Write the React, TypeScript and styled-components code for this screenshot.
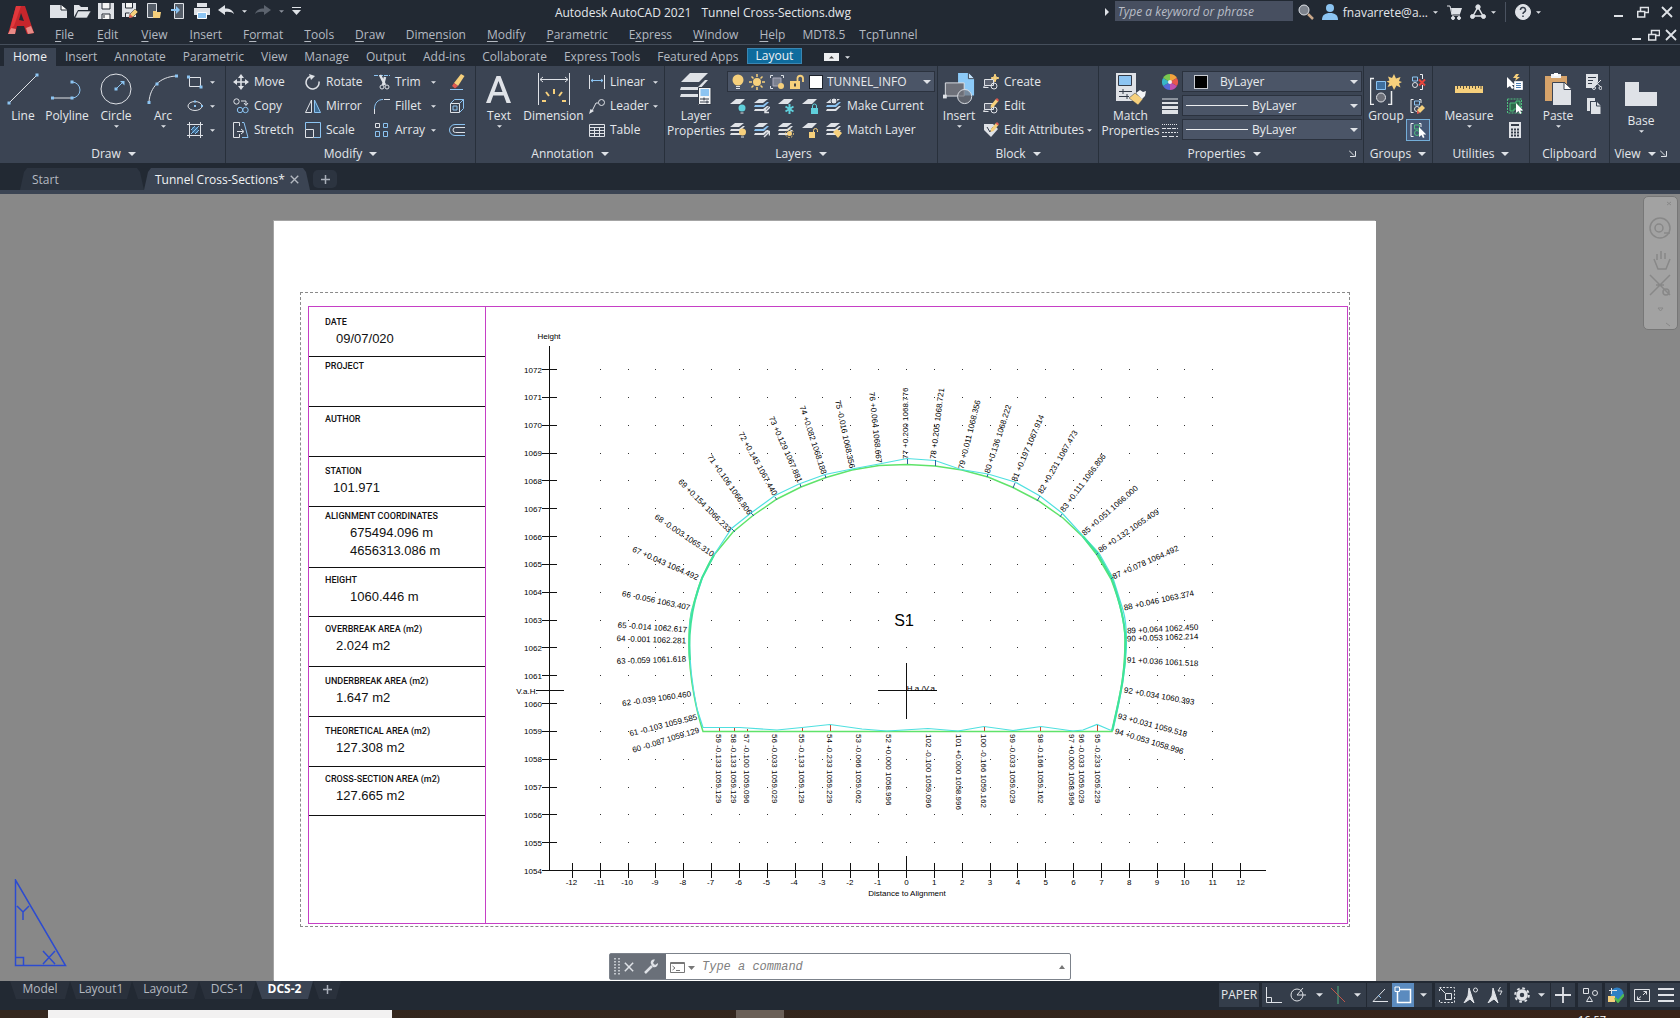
import React from "react";
import styled, { createGlobalStyle } from "styled-components";

const W = "#dfe2e7";
const B = "#8cc4f2";
const Y = "#f6d07c";
const DARK = "#222933";
const PANEL = "#3b4453";
const UI = '"Open Sans", "Noto Sans", sans-serif';
const CAD = '"Liberation Sans", Arial, sans-serif';

const Global = createGlobalStyle`
  * { box-sizing: border-box; }
  body { margin: 0; background: ${DARK}; font-family: ${UI}; font-size: 12px; color: #e4e7eb; }
  button, input, select { font: inherit; color: inherit; }
  button { background: none; border: 0; padding: 0; }
  svg { display: block; flex: none; }
`;

/* ---------- shell ---------- */

const Shell = styled.div`
  display: flex;
  flex-direction: column;
  height: 100vh;
  overflow: hidden;
`;
const Header = styled.header`
  display: flex;
  border-bottom: 1px solid #454e5b;
  flex: none;
`;
const LogoButton = styled.button`
  width: 50px;
  display: flex;
  padding: 6px 0 0 8px;
`;
const HeaderRows = styled.div`
  flex: 1;
  display: flex;
  flex-direction: column;
`;
const TitleRow = styled.div`
  display: flex;
  align-items: center;
  height: 24px;
  padding-right: 7px;
`;
const Quick = styled.div`
  display: flex;
  align-items: center;
  gap: 8px;
  padding-bottom: 2px;
`;
const Title = styled.h1`
  flex: 1;
  display: flex;
  justify-content: center;
  gap: 10px;
  margin: 0;
  font-size: 12px;
  font-weight: 400;
  white-space: nowrap;
`;
const IconButton = styled.button<{ $w?: number }>`
  display: flex;
  align-items: center;
  justify-content: center;
  width: ${(p) => (p.$w ? p.$w + "px" : "auto")};
  flex: none;
`;
const SearchBox = styled.input`
  width: 178px;
  height: 20px;
  margin: 0 5px 2px 6px;
  padding: 0 3px;
  border: 0;
  background: #474f60;
  color: #dfe2e7;
  font-style: italic;
  &::placeholder { color: #b9bec7; opacity: 1; }
`;
const Account = styled.div`
  display: flex;
  align-items: center;
  gap: 5px;
`;
const AccountButton = styled.button`
  display: flex;
  align-items: center;
  gap: 5px;
  margin-left: 3px;
`;
const VRule = styled.span`
  width: 1px;
  height: 20px;
  background: #4a5260;
  margin: 0 4px 0 4px;
`;
const WindowButtons = styled.div<{ $gap: number; $left?: number }>`
  display: flex;
  align-items: center;
  gap: ${(p) => p.$gap}px;
  margin-left: ${(p) => (p.$left ? p.$left + "px" : "auto")};
`;
const MenuRow = styled.nav`
  display: flex;
  align-items: center;
  height: 20px;
  padding: 1px 3px 0 5px;
  color: #b4b9c1;
`;
const MenuItem = styled.button<{ $gap: number }>`
  margin-right: ${(p) => p.$gap}px;
  line-height: 16px;
  u { text-underline-offset: 2px; }
`;

/* ---------- ribbon ---------- */

const RibbonTabs = styled.nav`
  display: flex;
  align-items: flex-end;
  height: 21px;
  padding-left: 4px;
  color: #b4b9c1;
  flex: none;
`;
const RibbonTab = styled.button<{ $kind?: "active" | "context" }>`
  height: ${(p) => (p.$kind === "context" ? 16 : 18)}px;
  margin-bottom: ${(p) => (p.$kind === "context" ? 2 : 0)}px;
  line-height: 16px;
  padding: 0 ${(p) => (p.$kind ? 9 : 8)}px 0 9px;
  background: ${(p) => (p.$kind === "active" ? PANEL : p.$kind === "context" ? "#0f6c9e" : "none")};
  box-shadow: ${(p) => (p.$kind === "context" ? "inset 0 0 0 1px #3a86b2" : "none")};
  color: ${(p) => (p.$kind ? "#f0f2f4" : "inherit")};
`;
const TabToggle = styled.button`
  display: flex;
  align-items: center;
  gap: 6px;
  height: 18px;
  margin-left: 22px;
`;
const Ribbon = styled.div`
  display: flex;
  height: 97px;
  padding: 0 6px 0 2px;
  background: ${PANEL};
  flex: none;
`;
const PanelBox = styled.section<{ $w: number }>`
  display: flex;
  flex-direction: column;
  width: ${(p) => p.$w}px;
  flex: none;
  border-right: 1px solid #28303b;
  &:last-child { flex: 1; border-right: 0; }
`;
const PanelBody = styled.div<{ $left?: number }>`
  display: flex;
  flex: 1;
  padding: 4px 0 0 ${(p) => p.$left ?? 0}px;
`;
const PanelTitle = styled.div`
  display: flex;
  height: 17px;
  margin-bottom: 1px;
`;
const PanelTitleButton = styled.button`
  display: flex;
  flex: 1;
  align-items: center;
  justify-content: center;
  gap: 7px;
  line-height: 16px;
`;
const Launcher = styled.button`
  width: 14px;
  display: flex;
  align-items: center;
  flex: none;
`;
const Big = styled.button<{ $w: number }>`
  display: flex;
  flex-direction: column;
  align-items: center;
  width: ${(p) => p.$w}px;
  flex: none;
  padding-top: 3px;
  line-height: 15px;
  white-space: pre-line;
  svg + span { margin-top: 3px; }
  span + svg { margin-top: 2px; }
`;
const Col = styled.div<{ $w?: number }>`
  display: flex;
  flex-direction: column;
  width: ${(p) => (p.$w ? p.$w + "px" : "auto")};
  flex: none;
`;
const Row = styled.div`
  display: flex;
  align-items: center;
  height: 24px;
`;
const Small = styled.button`
  display: flex;
  align-items: center;
  gap: 5px;
  height: 24px;
  line-height: 16px;
  padding-bottom: 1px;
  flex: none;
  white-space: nowrap;
`;
const SmallCaret = styled.button`
  display: flex;
  align-items: center;
  justify-content: center;
  width: 12px;
  height: 24px;
  margin-left: auto;
`;
const Combo = styled.label`
  display: flex;
  align-items: center;
  height: 21px;
  flex: 1;
  margin: 0 0 1px;
  padding: 0 3px 0 3px;
  background: #4b5567;
  border: 1px solid #2b323e;
  gap: 4px;
`;
const Select = styled.select`
  appearance: none;
  flex: 1;
  min-width: 0;
  border: 0;
  padding: 0;
  background: transparent;
  color: #e8eaed;
  line-height: 18px;
`;
const Swatch = styled.span<{ $c: string }>`
  width: 14px;
  height: 14px;
  flex: none;
  background: ${(p) => p.$c};
  border: 1px solid ${(p) => (p.$c === "#fff" ? "#1c222b" : "#c9ccd2")};
`;
const ComboSpace = styled.span`
  width: 4px;
`;
const Stroke = styled.span`
  width: 62px;
  height: 1px;
  background: #eceef0;
`;
const ActiveFrame = styled.button`
  display: flex;
  align-items: center;
  justify-content: center;
  width: 24px;
  height: 22px;
  background: #465876;
  border: 1px solid #74aed8;
  margin: 1px 0 0 -4px;
`;
const LayerTools = styled(Row)`
  gap: 8px;
  padding-left: 3px;
`;

/* ---------- document tabs ---------- */

const DocTabs = styled.nav`
  display: flex;
  height: 31px;
  padding: 5px 0 0 20px;
  border-bottom: 4px solid ${PANEL};
  flex: none;
`;
const DocTab = styled.div<{ $w: number; $on?: boolean }>`
  display: flex;
  align-items: center;
  width: ${(p) => p.$w}px;
  padding: 0 12px 0 ${(p) => (p.$on ? 11 : 12)}px;
  white-space: nowrap;
  background: ${(p) => (p.$on ? PANEL : "#2c3440")};
  color: ${(p) => (p.$on ? "#f0f2f4" : "#b4b9c1")};
  clip-path: polygon(7px 0, calc(100% - 7px) 0, calc(100% - 4px) 4px, 100% 100%, 0 100%, 4px 4px);
  gap: 5px;
`;
const AddTab = styled.button`
  width: 24px;
  height: 18px;
  display: flex;
  align-items: center;
  justify-content: center;
  margin: 2px 0 0 3px;
  background: #2c3440;
  border-radius: 5px;
`;

/* ---------- drawing area ---------- */

const Canvas = styled.main`
  position: relative;
  display: flex;
  justify-content: center;
  flex: 1;
  min-height: 0;
  overflow: hidden;
  padding: 27px 30px 0 0;
  background: #888;
`;
const Paper = styled.div`
  width: 1102px;
  flex: none;
  padding: 71px 26px 0;
  background: #fff;
  box-shadow: -1px -1px 0 #a4a4a4;
  color: #111;
  font-family: ${CAD};
`;
const Margins = styled.div`
  height: 635px;
  padding: 13px 1px 2px 7px;
  border: 1px dashed #8a8a8a;
`;
const Sheet = styled.div`
  display: flex;
  height: 618px;
  border: 1px solid #c63fc6;
`;
const TitleBlock = styled.div`
  width: 177px;
  flex: none;
  border-right: 1px solid #c63fc6;
`;
const Field = styled.section<{ $h: number; $top: number }>`
  height: ${(p) => p.$h}px;
  padding: ${(p) => p.$top}px 0 0 16px;
  border-bottom: 1px solid #111;
`;
const FieldName = styled.h2`
  margin: 0 0 2px;
  font-family: Roboto, ${CAD};
  font-size: 9px;
  line-height: 12px;
  font-weight: 500;
`;
const FieldValue = styled.p<{ $left: number }>`
  margin: 0 0 0 ${(p) => p.$left}px;
  font-size: 13px;
  line-height: 18px;
`;
const Plot = styled.svg`
  flex: 1;
  min-width: 0;
  height: 616px;
  font-family: ${CAD};
  font-size: 8px;
  fill: #000;
`;
const Ucs = styled.svg`
  position: absolute;
  left: 14px;
  bottom: 14px;
`;
const NavBar = styled.div`
  position: absolute;
  top: 2px;
  right: 2px;
  width: 35px;
  height: 134px;
  border: 1px solid #777;
  border-radius: 5px;
  background: #a2a2a2;
`;
const CommandBar = styled.form`
  position: absolute;
  left: 609px;
  bottom: 1px;
  display: flex;
  width: 462px;
  height: 27px;
  border: 1px solid #7c828b;
  border-radius: 2px;
  background: #fff;
`;
const CommandGrip = styled.div`
  display: flex;
  align-items: center;
  width: 56px;
  padding-left: 4px;
  background: #6a7079;
`;
const CommandInput = styled.input`
  flex: 1;
  min-width: 0;
  border: 0;
  padding: 0 0 0 4px;
  outline: 0;
  background: transparent;
  color: #333;
  font: italic 12px "Liberation Mono", monospace;
  &::placeholder { color: #808080; opacity: 1; }
`;

/* ---------- bottom bars ---------- */

const BottomBar = styled.footer`
  display: flex;
  height: 29px;
  flex: none;
`;
const LayoutTabs = styled.nav`
  display: flex;
  padding-left: 10px;
  align-items: flex-start;
  flex: 1;
`;
const LayoutTab = styled.button<{ $on?: boolean; $w: number }>`
  width: ${(p) => p.$w}px;
  height: 18px;
  line-height: 16px;
  padding-bottom: 2px;
  background: ${(p) => (p.$on ? PANEL : "#2a313c")};
  color: ${(p) => (p.$on ? "#fff" : "#b4b9c1")};
  font-weight: ${(p) => (p.$on ? 700 : 400)};
  clip-path: polygon(0 0, 100% 0, calc(100% - 5px) 100%, 6px 100%);
  display: flex;
  align-items: center;
  justify-content: center;
`;
const Status = styled.div`
  display: flex;
  gap: 3px;
  padding: 2px 0 3px;
`;
const StatusGroup = styled.div<{ $w: number }>`
  display: flex;
  align-items: center;
  width: ${(p) => p.$w}px;
  background: #343d4a;
`;
const StatusButton = styled.button<{ $w: number; $on?: boolean; $rule?: boolean }>`
  display: flex;
  align-items: center;
  justify-content: center;
  width: ${(p) => p.$w}px;
  height: 24px;
  padding-bottom: 1px;
  background: ${(p) => (p.$on ? "#5b8bbf" : "none")};
  border-left: ${(p) => (p.$rule ? "1px solid #222933" : "0")};
`;
const Taskbar = styled.div`
  display: flex;
  justify-content: space-between;
  height: 8px;
  flex: none;
  overflow: hidden;
  padding-left: 48px;
  background: linear-gradient(90deg, #35281f, #33251c 60%, #3a2419);
`;
const TaskSearch = styled.div`
  width: 344px;
  background: #f2f1f1;
`;
const TaskItem = styled.div`
  width: 48px;
  margin-left: 344px;
  background: #6b6058;
`;
const Clock = styled.time`
  margin: 4px 74px 0 auto;
  line-height: 12px;
  font-size: 11px;
  color: #fff;
`;

/* ---------- icons ---------- */

type IconProps = { s?: number; h?: number; vb?: string; children?: React.ReactNode };
const I = ({ s = 16, h, vb, children }: IconProps) => (
  <svg width={s} height={h ?? s} viewBox={vb ?? `0 0 ${s} ${h ?? s}`} fill="none" stroke={W} aria-hidden="true">
    {children}
  </svg>
);
const Caret = ({ s = 5, c = W }: { s?: number; c?: string }) => (
  <svg width={s} height={Math.ceil(s / 2)} viewBox="0 0 10 5" aria-hidden="true">
    <path d="M0 0H10L5 5Z" fill={c} />
  </svg>
);
const dot = (x: number, y: number, r = 1.5) => (
  <rect x={x - r} y={y - r} width={r * 2} height={r * 2} fill={B} stroke="none" />
);

const LineIcon = () => <I s={32}><path d="M3 29L29 3" />{dot(2, 30)}{dot(30, 2)}</I>;
const PolylineIcon = () => (
  <I s={32}><path d="M1 25H21" /><path d="M21 9a8 8 0 0 1 0 16" stroke={B} />{dot(1.5, 25)}{dot(21, 25)}{dot(21, 9)}</I>
);
const CircleIcon = () => (
  <I s={32}><circle cx="16" cy="16" r="15" /><path d="M16 16L23 9" stroke={B} />{dot(16, 16)}<path d="M20 8h4.500v4.500z" fill={B} stroke="none" /></I>
);
const ArcIcon = () => <I s={32}><path d="M2 29C3 14 13 4 29 3" />{dot(2, 29.500)}{dot(10, 11)}{dot(29.500, 3)}</I>;
const RectIcon = () => <I><path d="M2.500 3.500h11v9h-11z" />{dot(1.500, 3)}{dot(14, 13)}</I>;
const EllipseIcon = () => <I><ellipse cx="8" cy="8" rx="7" ry="4.500" />{dot(8, 8, 1)}{dot(8, 3.500, 1)}{dot(15, 8, 1)}</I>;
const HatchIcon = () => (
  <I><path d="M5 5h6v6H5z" fill="#3f6d94" stroke="none" /><path d="M4 8l4-4M4 12l8-8M8 12l4-4" stroke={B} /><path d="M2.500 0v16M13.500 0v16M0 2.500h16M0 13.500h16" /></I>
);
const MoveIcon = () => <I><path d="M8 2v12M2 8h12" strokeWidth="1.500" /><path d="M8 0l3 4H5zM8 16l3-4H5zM0 8l4-3v6zM16 8l-4-3v6z" fill={W} stroke="none" /></I>;
const CopyIcon = () => (
  <I><circle cx="3.500" cy="3.500" r="2.700" /><path d="M8 3h5v4M11 5l2 2.500 2-2.500" /><circle cx="7" cy="12" r="2.700" stroke={B} /><circle cx="12.500" cy="12" r="2.700" stroke={B} /></I>
);
const StretchIcon = () => <I><path d="M6.500 4V.5h-6v15h6V12" /><path d="M9 .500h2l4 15H9" stroke={B} /><path d="M4 9.500h6M8 7l3 2.500L8 12" /></I>;
const RotateIcon = () => <I><path d="M5 2.500A6.500 6.500 0 1 0 14 7.500" strokeWidth="1.500" /><path d="M4 0l6 2-4 4z" fill={W} stroke="none" /></I>;
const MirrorIcon = () => <I><path d="M6.500 2v12.500h-6z" /><path d="M9.500 2v12.500h6z" stroke={B} fill="#3f6d94" /></I>;
const ScaleIcon = () => <I><path d="M.500 7V.5h15v15H9" stroke={B} /><path d="M.500 7.500h8v8h-8z" /></I>;
const TrimIcon = () => (
  <I><path d="M0 1.500h16" stroke={B} strokeDasharray="4 1" /><path d="M6 1l5 10M11 3L9 11" strokeWidth="2.500" /><circle cx="8" cy="13" r="2" /><circle cx="13" cy="13" r="2" /></I>
);
const FilletIcon = () => <I><path d="M.500 16v-5" /><path d="M.500 11C.5 5 4 1.500 9 1.500" stroke={B} /><path d="M10 1.500h6" /></I>;
const ArrayIcon = () => <I><path d="M1.500 1.500h4v4h-4z" /><path d="M9.500 1.500h4v4h-4zM1.500 9.500h4v5h-4zM9.500 9.500h4v5h-4z" stroke={B} /></I>;
const EraseIcon = () => (
  <I><path d="M12 0l3.500 2L9 12 5 9z" fill={Y} stroke="none" /><path d="M5 9l4 3-3 2.500L3 12z" fill="#e05a50" stroke="none" /><path d="M1 15.500h13" stroke={B} /></I>
);
const ExplodeIcon = () => <I><path d="M1.500 5.500h9v9h-9z" /><path d="M1.500 5.500l4-4h9v9l-4 4M10.500 5.500l4-4M4 8h4v4H4z" stroke={B} /></I>;
const OffsetIcon = () => <I><path d="M16 2.500H6a5.500 5.500 0 0 0 0 11h10" stroke={B} /><path d="M16 5.500H6.500a2.500 2.500 0 0 0 0 5H16" /></I>;
const TextIcon = () => (
  <I s={32} h={32}><path d="M3 30L13.500 3h4L28 30h-4.500l-2.700-7.500H10.200L7.500 30zM11.500 19h8L15.500 8z" fill={W} stroke="none" /></I>
);
const DimensionIcon = () => (
  <I s={32}>
    <path d="M.500 0v32M31.500 0v32M2 6.500h28M5 4L2 6.500 5 9M27 4l3 2.500L27 9" />
    <g stroke={Y} strokeWidth="2"><path d="M4 28h4M24 28h4M8 19l3 4M24 19l-3 4M16 16v5" /></g>
  </I>
);
const LinearIcon = () => <I><path d="M.500 1v14M15.500 1v14" /><path d="M2 6.500h12" stroke={B} /><path d="M4 5L2 6.500 4 8M12 5l2 1.500L12 8" stroke={B} /></I>;
const LeaderIcon = () => <I><circle cx="12.500" cy="4.500" r="3" /><path d="M9.500 5H7L3 13" /><path d="M0 16l1.500-5 3.500 2z" fill={W} stroke="none" /></I>;
const TableIcon = () => <I><path d="M.500 2.500h15v12H.5zM.500 5.500h15M.500 8.500h15M.500 11.500h15M5.500 5v9M10.500 5v9" /></I>;
const Stack = ({ blue }: { blue?: boolean }) => (
  <g stroke="none">
    <path d="M5 1h9l-5 4H0z" fill={W} />
    <path d="M1 7h8l4-3h2l-5 5H0z" fill={blue ? B : W} />
    <path d="M1 11h8l4-3h2l-5 5H0z" fill={W} />
  </g>
);
const LayerPropsIcon = () => (
  <I s={32}>
    <g stroke="none" fill={W}>
      <path d="M10 0h18l-9 9H1z" /><path d="M1 14h17l7-7h3l-9 10H0z" /><path d="M1 21h17v3H0z" />
      <path d="M18 14h13v18H18z" fill="#f4f5f6" /><path d="M20.500 16h8.500v7h-8.500z" fill={B} />
    </g>
    <path d="M18.500 14.500h12.500v17H18.500zM20 26h9M20 29h9M24 24.500v3M27 27.500v3" stroke="#333b48" />
  </I>
);
const LayerSmall = ({ badge, blue, one }: { badge: string; blue?: boolean; one?: boolean }) => (
  <I>
    {one ? <path d="M6 1h9l-5 5H0z" fill={W} stroke="none" /> : <Stack blue={blue} />}
    {badge === "bulbOff" && <><circle cx="12" cy="10" r="3.500" fill="#5fd0dc" stroke="none" /><path d="M10.500 15h3" /></>}
    {badge === "bulb" && <><circle cx="12.500" cy="10" r="3.500" fill={Y} stroke="none" /><path d="M11 15h3" /></>}
    {badge === "in" && <path d="M16 9l-5 5M11 10v4.500h4" strokeWidth="1.500" />}
    {badge === "out" && <path d="M10 15l5-5M11 9.500h4.500v4" strokeWidth="1.500" />}
    {badge === "snow" && <path d="M11.500 6v10M7.500 8.500l8 5M15.500 8.500l-8 5" stroke="#5fd0dc" strokeWidth="2" />}
    {badge === "lock" && <><path d="M9 10h7v6H9z" fill="#5fd0dc" stroke="none" /><path d="M10.500 10V8a2 2 0 0 1 4 0v2" stroke="#5fd0dc" /></>}
    {badge === "unlock" && <><path d="M7 10h6v6H7z" fill={Y} stroke="none" /><path d="M11.500 10V8.500a2 2 0 0 1 4 0V10" stroke={Y} /></>}
    {badge === "sun" && <><circle cx="11.500" cy="11.500" r="2.500" fill={Y} stroke="none" /><circle cx="11.500" cy="11.500" r="4" stroke={Y} strokeDasharray="1.500 1.500" /></>}
    {badge === "match" && <path d="M7 10l4-3 5 4-4 5z" fill={Y} stroke="none" />}
    {badge === "current" && <circle cx="8" cy="3" r="3" fill={W} stroke="#3b4453" />}
  </I>
);
const Bulb = () => <I s={14} h={16}><circle cx="7" cy="6" r="5.500" fill={Y} stroke="none" /><path d="M5 12.500h4M5 14.500h4" /></I>;
const Sun = () => (
  <I><circle cx="8" cy="8" r="4" fill={Y} stroke="none" /><path d="M8 0v3M8 13v3M0 8h3M13 8h3M2.500 2.500l2 2M11.500 11.500l2 2M13.500 2.500l-2 2M2.500 13.500l2-2" stroke={Y} strokeWidth="1.500" /></I>
);
const VpFreeze = () => (
  <I><path d="M1.500 4V1.500H4M12 1.500h2.500V4M1.500 12v2.500H4" /><path d="M4 4h8v8H4z" fill="#7b8190" stroke="#aab" /><circle cx="12" cy="12" r="3" fill={Y} stroke="none" /></I>
);
const Unlock = () => <I><path d="M1 7h10v8H1z" fill={Y} stroke="none" /><path d="M8.500 7V4a2.800 2.800 0 0 1 5.500 0v4" stroke={Y} strokeWidth="1.800" /><path d="M6 9.500v3" stroke="#444" strokeWidth="2" /></I>;
const InsertIcon = () => (
  <I s={32} vb="0 0 34 34">
    <path d="M16 0h11l6 6v18H16z" fill="#8ccaf8" stroke="none" /><path d="M27 0v6h6" stroke={PANEL} fill="#c8e4fa" />
    <path d="M2.500 10.500h20v14h-20z" fill="#6d7079" /><circle cx="23" cy="25" r="7.500" fill="#6d7079" fillOpacity=".7" />
    <path d="M0 23h4v4H0z" fill={W} stroke="none" />
  </I>
);
const BlockIcon = ({ kind }: { kind: "new" | "edit" | "attr" }) => (
  <I>
    {kind === "attr" ? (
      <><path d="M1 2h9l5 5-7 8-7-7z" fill={W} stroke="none" /><path d="M4 5l3 5 3-5" stroke="#333b48" /></>
    ) : (
      <><path d="M1.500 5.500h9v6h-9zM1.500 11.500l-1 2h5" fill="#5c6270" /><circle cx="11" cy="12" r="3" /></>
    )}
    {kind === "new" ? (
      <path d="M12 0l1 3 3 1-3 1-1 3-1-3-3-1 3-1z" fill={Y} stroke={Y} />
    ) : (
      <><path d="M8 7l5-6 2.500 2-5 6-3 1z" fill={Y} stroke="none" /><path d="M12.500 1.500L14 0l2 2-1 1.500z" fill="#e05a50" stroke="none" /></>
    )}
  </I>
);
const MatchIcon = () => (
  <I s={32}>
    <path d="M1 0h20v28H1z" fill={W} stroke="none" /><path d="M3.500 2.500h13v10h-13z" fill={B} stroke="#333b48" />
    <path d="M4 18.500h13M4 23.500h10M8 16v5M12 21v5" stroke="#333b48" />
    <path d="M14 25l6-5 8 6-5 6z" fill={Y} stroke="#333b48" strokeWidth=".5" /><path d="M21 20l4-3 3 2 3-1-1 5-3 3z" fill="#f4f5f6" stroke="none" />
  </I>
);
const Wheel = () => (
  <I>
    {["#f2a33c", "#e8574f", "#c04fb0", "#5668d8", "#38b6c8", "#7ac74f"].map((c, i) => (
      <path key={c} d="M8 8L8 0A8 8 0 0 1 14.930 4Z" fill={c} stroke="none" transform={`rotate(${i * 60} 8 8)`} />
    ))}
    <circle cx="8" cy="8" r="2" fill="#eee" stroke="none" />
  </I>
);
const Weights = () => <I><path d="M0 1h16" /><path d="M0 5h16" strokeWidth="2" /><path d="M0 9.500h16" strokeWidth="3" /><path d="M0 14h16" strokeWidth="4" /></I>;
const Types = () => <I><path d="M0 2.500h16" strokeDasharray="1 1" /><path d="M0 6.500h16" strokeDasharray="4 1" /><path d="M0 10.500h16" strokeDasharray="2 1" /><path d="M0 14.500h16" strokeDasharray="5 2" /></I>;
const GroupIcon = () => (
  <I s={32}>
    <path d="M4 5.500H.5v26H4M18 31.500h3.500V18" stroke="#eceef0" strokeWidth="1.500" />
    <path d="M6.500 8.500h9v8h-9z" fill="#3e6f9e" stroke={B} /><circle cx="11" cy="24.500" r="4.500" fill="#6d7079" />
    <path d="M24 1l2 4.500L30.500 4 29 8l3 1-3 1.500 1.500 4-4-2L24 17l-2-4.500-4.500 1.500 2-4-3-1.500 3-1-1.500-4 4 1.500z" fill={Y} stroke="none" />
  </I>
);
const GroupSmall = ({ kind }: { kind: "un" | "edit" | "sel" }) => (
  <I>
    <path d={kind === "un" ? "M10 .500h2.500V5M10 15.500h2.500V11" : "M3.500 1.500H1v13h2.500M9 1.500h2V5"} stroke="#f0f2f4" />
    <g transform={kind === "un" ? "translate(-1 0)" : "translate(1 0)"}>
      <path d="M3.500 3h5v4h-5z" stroke={kind === "sel" ? "#4fc07e" : B} /><circle cx="6" cy="11" r="2.500" stroke={kind === "sel" ? "#4fc07e" : W} />
    </g>
    {kind === "un" && <path d="M9 5.500l6 6M15 5.500l-6 6" stroke="#e8453c" strokeWidth="2" />}
    {kind === "edit" && <><path d="M7 12l5-5 3 3-5 5z" fill={Y} stroke="none" /><path d="M7 12l3 3-3 1z" fill="#e05a50" stroke="none" /></>}
    {kind === "sel" && <path d="M9 5v10l2.500-2 1.500 3 1.500-.8-1.300-2.700h3z" fill="#fff" stroke="none" />}
  </I>
);
const MeasureIcon = () => (
  <I s={30} h={32}><path d="M1 13h28v7H1z" fill={Y} stroke="none" /><path d="M3.500 13v3M6.500 13v2M9.500 13v3M12.500 13v2M15.500 13v3M18.500 13v2M21.500 13v3M24.500 13v2M27 13v3" stroke="#5c5340" /></I>
);
const QuickSelect = () => <I><path d="M9 0l-3 4h3l-1 3 5-4h-3l2-3z" fill={Y} stroke="none" /><path d="M0 3v11l3-2 2 3 2-1-2-3h3z" fill="#fff" stroke="none" /><path d="M7.500 7.500h8v8h-8z" fill="#fff" /><path d="M9 9.500h5M9 11.500h5M9 13.500h5" stroke="#4b7fb4" /></I>;
const SelectAll = () => <I><path d="M.500 1h14v14H.5z" stroke="#4fc07e" strokeDasharray="2 1" /><path d="M3 5h6V3h4v8H7v2H3z" stroke="#4fc07e" fill="#2f6b4b" /><path d="M9 5v10l2.500-2 1.500 3 1.500-.8-1.300-2.700h3z" fill="#fff" stroke="none" /></I>;
const Calculator = () => <I><path d="M2 0h12v16H2z" fill={W} stroke="none" /><path d="M4 3h8" stroke="#333b48" strokeWidth="2" /><path d="M4 7.500h8M4 10.500h8M4 13.500h8" stroke="#333b48" strokeWidth="2" strokeDasharray="2 1" /></I>;
const PasteIcon = () => (
  <I s={32}>
    <path d="M3 3h22v25H3z" fill="#d6a36a" stroke="none" /><path d="M9 1h10v4H9z" fill="#f0f2f4" stroke="none" /><path d="M12 0h4v3h-4z" fill="#fff" stroke="none" />
    <path d="M10.500 9.500h12l7 7V32.500h-19z" fill="#dfe2e7" stroke={PANEL} /><path d="M22 9v7.500h8z" fill="#fff" stroke={PANEL} />
  </I>
);
const CutClip = () => <I><path d="M0 0h12v8L8 14H0z" fill={W} stroke="none" /><path d="M2 3.500h8M2 6.500h5M2 9.500h4" stroke="#333b48" /><path d="M7 6l8 7M15 6l-7 7" /><circle cx="8" cy="14" r="1.500" /><circle cx="14.500" cy="14" r="1.500" /></I>;
const CopyClip = () => <I><path d="M1 0h8v3H4v10H1z" fill={W} stroke="none" /><path d="M5 4h6l3.500 3.500V16H5z" fill={W} stroke="none" /><path d="M10.500 4v4H15" stroke={PANEL} /></I>;
const BaseIcon = () => <I s={32} h={37}><path d="M0 9h14v10h18v14H0z" fill={W} stroke="none" /></I>;

const Minimize = () => <I s={12}><path d="M1 10h9" strokeWidth="2" /></I>;
const Restore = () => <I s={12}><path d="M3.500 5V1.500h8v5H8" strokeWidth="1.500" /><path d="M.700 5.500h7v5.500h-7z" strokeWidth="1.500" /></I>;
const Close = ({ s = 12, c = W }: { s?: number; c?: string }) => <I s={s} vb="0 0 12 12"><path d="M1 1l10 10M11 1L1 11" stroke={c} strokeWidth="1.800" /></I>;
const Plus = ({ c = "#a9afb9" }: { c?: string }) => <I s={9}><path d="M4.500 0v9M0 4.500h9" stroke={c} strokeWidth="1.500" /></I>;

const quick: [string, React.ReactNode, number][] = [
  ["New", <I s={17} h={16}><path d="M0 2h11l6 5v8H0z" fill={W} stroke="none" /><path d="M11 2v5h6" stroke={DARK} fill="#fff" /></I>, 16],
  ["Open", <I s={17} h={16}><path d="M0 14V2h5l2 2h7v3H4z" fill={W} stroke="none" /><path d="M4 8h13l-4 7H1z" fill={W} stroke={DARK} strokeWidth=".6" /></I>, 16],
  ["Save", <I><path d="M0 0h16v16H0z" fill={W} stroke="none" /><path d="M4 0v6h8V0M4 16v-5h8v5" stroke={DARK} fill="#f5f5f5" /><path d="M6 12v3" stroke={DARK} /></I>, 16],
  ["Save As", <I><path d="M0 0h14v14H0z" fill={W} stroke="none" /><path d="M3.500 0v5h7V0M3.500 14v-4h4" stroke={DARK} fill="#f5f5f5" /><path d="M7 15l1-4 5-5 3 3-5 5z" fill={Y} stroke={DARK} strokeWidth=".5" /><path d="M7 15l1-4 3 3z" fill="#e05a50" stroke="none" /></I>, 16],
  ["Open from Web", <I><path d="M1.500.5h9v14h-9z" fill="#555d68" /><path d="M7 8h3l1 1h4l-1 6H7z" fill={Y} stroke="none" /></I>, 16],
  ["Save to Web", <I><path d="M4.500.5h9v15h-9z" fill="#555d68" /><path d="M1 6h5V3l4 4-4 4V8H1z" fill={B} stroke="none" /></I>, 16],
  ["Plot", <I><path d="M3 0h10v4H3z" fill={W} stroke="none" /><path d="M0 5h16v7H0z" fill={W} stroke="none" /><path d="M3.500 9.500h9v6h-9z" fill={B} stroke="#fff" /></I>, 16],
];
const Undo = ({ flip }: { flip?: boolean }) => (
  <I><path d="M0 7l7-5v3.500c5 0 8 2 9 5.500-2-2-5-2.500-9-2V12z" fill={flip ? "#5c636e" : W} stroke="none" transform={flip ? "matrix(-1 0 0 1 16 0)" : undefined} /></I>
);

const menus: [string, string, string, number][] = [
  ["", "F", "ile", 23], ["", "E", "dit", 23], ["", "V", "iew", 22], ["", "I", "nsert", 21], ["F", "o", "rmat", 21],
  ["", "T", "ools", 21], ["", "D", "raw", 21], ["Dime", "n", "sion", 21], ["", "M", "odify", 21], ["", "P", "arametric", 21],
  ["E", "x", "press", 21], ["", "W", "indow", 21], ["", "H", "elp", 17], ["MDT8.5", "", "", 14], ["TcpTunnel", "", "", 0],
];
const tabs = ["Insert", "Annotate", "Parametric", "View", "Manage", "Output", "Add-ins", "Collaborate", "Express Tools", "Featured Apps"];

const Panel = ({ w, title, left, launcher, menu = true, children }: {
  w: number; title: string; left?: number; launcher?: boolean; menu?: boolean; children: React.ReactNode;
}) => (
  <PanelBox $w={w}>
    <PanelBody $left={left}>{children}</PanelBody>
    <PanelTitle>
      <PanelTitleButton>{title}{menu && <Caret s={8} />}</PanelTitleButton>
      {launcher && <Launcher aria-label={title + " settings"}><I s={7}><path d="M0 .500l5 5M6.500 1v5.500H1" /></I></Launcher>}
    </PanelTitle>
  </PanelBox>
);
const Tool = ({ icon, label, menu }: { icon: React.ReactNode; label: string; menu?: boolean }) => (
  <Row>
    <Small>{icon}{label}</Small>
    {menu && <SmallCaret aria-label={label + " options"}><Caret /></SmallCaret>}
  </Row>
);
const IconTool = ({ icon, label, menu }: { icon: React.ReactNode; label: string; menu?: boolean }) => (
  <Row>
    <Small aria-label={label}>{icon}</Small>
    {menu && <SmallCaret aria-label={label + " options"}><Caret /></SmallCaret>}
  </Row>
);
const BigTool = ({ icon, label, w, menu }: { icon: React.ReactNode; label: string; w: number; menu?: boolean }) => (
  <Big $w={w}>{icon}<span>{label}</span>{menu && <Caret />}</Big>
);
const LayerRow = ({ names, badges, label, last }: { names: string[]; badges: string[]; label: string; last: string }) => (
  <LayerTools>
    {badges.map((b, i) => (
      <Small key={b} aria-label={names[i]}><LayerSmall badge={b} blue={i === 1} one={i !== 1 && (i === 3 || b === "bulbOff" || b === "snow")} /></Small>
    ))}
    <Small><LayerSmall badge={last} blue={last === "current"} />{label}</Small>
  </LayerTools>
);

/* ---------- cross-section ---------- */

const U = 27.84;
const px = (x: number) => 906.5 + x * U;
const py = (h: number) => 369.5 + (1072 - h) * U;
const range = (a: number, b: number) => Array.from({ length: b - a + 1 }, (_, i) => a + i);

const leftLabels: [string, number, number, number][] = [
  ["60 -0.087 1059.129", 699, 730, -17], ["61 -0.103 1059.585", 697, 717, -14], ["62 -0.039 1060.460", 691, 694, -8],
  ["63 -0.059 1061.618", 686, 659, -2], ["64 -0.001 1062.281", 686, 641, 2], ["65 -0.014 1062.617", 687, 630, 4],
  ["66 -0.056 1063.407", 690, 608, 12], ["67 +0.043 1064.492", 698, 578, 24], ["68 -0.003 1065.310", 713, 555, 34],
  ["69 +0.154 1066.233", 730, 531, 45], ["71 +0.106 1066.806", 750, 514, 55], ["72 +0.145 1067.440", 775, 495, 61],
  ["73 +0.129 1067.881", 800, 482, 66], ["74 +0.082 1068.188", 824, 474, 72], ["75 -0.016 1068.356", 852, 468, 78],
  ["76 +0.064 1068.667", 879, 463, 84],
];
const rightLabels: [string, number, number, number][] = [
  ["77 +0.200 1068.776", 905, 459, -90], ["78 +0.205 1068.721", 933, 459, -83], ["79 +0.011 1068.356", 961, 469, -76],
  ["80 +0.136 1068.222", 987, 473, -72], ["81 +0.197 1067.914", 1014, 481, -67], ["82 +0.231 1067.473", 1040, 493, -60],
  ["83 +0.111 1066.806", 1062, 511, -53], ["85 +0.051 1066.000", 1083, 534, -41], ["86 +0.132 1065.409", 1099, 551, -34],
  ["87 +0.078 1064.492", 1113, 577, -24], ["88 +0.046 1063.374", 1124, 608, -12], ["89 +0.064 1062.450", 1127, 631, -3],
  ["90 +0.053 1062.214", 1127, 639, -2], ["91 +0.036 1061.518", 1127, 660, 3], ["92 +0.034 1060.393", 1124, 690, 10],
  ["93 +0.031 1059.518", 1118, 716, 15], ["94 +0.053 1058.996", 1115, 731, 17],
  ["59 -0.133 1059.129", 718, 734, 90], ["58 -0.133 1059.129", 733, 734, 90], ["57 -0.100 1059.096", 746, 734, 90],
  ["56 -0.033 1059.029", 774, 734, 90], ["55 -0.133 1059.129", 801, 734, 90], ["54 -0.233 1059.229", 829, 734, 90],
  ["53 -0.066 1059.062", 858, 734, 90], ["52 +0.000 1058.996", 888, 734, 90], ["102 -0.100 1059.096", 928, 734, 90],
  ["101 +0.000 1058.996", 958, 734, 90], ["100 -0.166 1059.162", 983, 734, 90], ["99 -0.033 1059.029", 1012, 734, 90],
  ["98 -0.166 1059.162", 1040, 734, 90], ["97 +0.000 1058.996", 1071, 734, 90], ["96 -0.033 1059.029", 1081, 734, 90],
  ["95 -0.233 1059.229", 1097, 734, 90],
];
const theoretical =
  "M703 731.500C698 716 688.500 680 689 640C689 625 691 612 693 606C696 595 698 588 702 578C706 570 709 562 714 555L733 532 753 515.500 777 499 801 487 826 477.500 852 470 879 465.500 907 464.500 935 466 962 470 988 477 1013 487.500 1038 500.500 1063 518 1083 537 1097 555 1111 579C1121 605 1125 622 1125 640C1125 672 1121 692 1112 731.500Z";
const measured =
  "M703 727.500L697 709C692 685 689.500 660 689.500 640C689 622 692 609 694 604L703 576 714 555 731.500 528.500 751 513 775 495.500 799 484 825 474.500 852 469 879 464 907 458.500 935 460.500 961 469.500 988 474 1015 482 1040 496 1062 513 1083 536 1099 553 1113 578 1123 610C1126 620 1126.500 630 1126.500 640C1126.500 665 1122 692 1113 730L1110 730 1097 724.500 1083 730 1073 731 1041 726.500 1013 730.500 984 726.500 958 731 928 728.500 887 731 862 729 830 724.500 802 727.500 777 730 740 727.500Z";

const CrossSection = () => (
  <Plot viewBox="486 307 861 616" role="img" aria-label="Tunnel cross-section S1">
    <g fill="#333">
      {range(1055, 1072).map((h) => range(-11, 11).map((x) => (
        <rect key={x + "," + h} x={Math.round(px(x) - 0.5)} y={Math.round(py(h) - 0.5)} width="1" height="1" />
      )))}
    </g>
    <g stroke="#111" shapeRendering="crispEdges">
      <path d="M549.500 346V871M549 870.500H1266" />
      {range(1054, 1072).map((h) => <path key={h} d={`M542 ${Math.floor(py(h)) + 0.5}H557`} />)}
      {range(-12, 12).map((x) => <path key={x} d={`M${Math.floor(px(x)) + 0.5} ${x ? 863 : 856}V878`} />)}
      <path d="M536 690.500H564M878 690.500H937M906.500 663V719" />
    </g>
    <g textAnchor="middle">
      {range(1054, 1072).map((h) => <text key={h} x="533" y={py(h) + 3}>{h}</text>)}
      {range(-12, 12).map((x) => <text key={x} x={px(x) - (x < 0 ? 1 : 0)} y="885">{x}</text>)}
      <text x="549" y="339">Height</text>
      <text x="907" y="896">Distance to Alignment</text>
      <text x="527" y="694">V.a.H.</text>
      <text x="922" y="691">H.a./V.a.</text>
      <text x="904" y="626" fontSize="16">S1</text>
    </g>
    <path d={theoretical} fill="none" stroke="#5fe36a" strokeWidth="1.500" />
    <path d={measured} fill="none" stroke="#4fe0e0" strokeWidth="1.200" />
    <path d="M690 660C688 640 690 610 702 578L714 555M1083 536.500L1098 554 1112 579C1121 605 1125 622 1125.500 640C1126 672 1121 692 1112 731" fill="none" stroke="#3fe39a" strokeWidth="2" />
    <path d="M719.500 728v3M734.500 728v3M747.500 729v2M802.500 728v3M830.500 725v6M984.500 727v4M1040.500 727v4M1097.500 725v6" stroke="#c8452c" />
    <path d="M732 529l3 3M751 513l3 3M775 497l2 3M800 484l1 3M825 475l1 3M907.500 459v5M935.500 460v6M988 474l-1 3M1015 483l-2 5M1040 496l-3 5M1062 514l-2 3M1098 553l-2 2M1113 577l-2 2" stroke="#2b5fa0" />
    {leftLabels.map(([t, x, y, a]) => (
      <text key={t} textAnchor="end" dominantBaseline="central" transform={`translate(${x} ${y}) rotate(${a})`}>{t}</text>
    ))}
    {rightLabels.map(([t, x, y, a]) => (
      <text key={t} dominantBaseline="central" transform={`translate(${x} ${y}) rotate(${a})`}>{t}</text>
    ))}
  </Plot>
);

const fields: { h: number; top: number; name: string; left?: number; values?: string[] }[] = [
  { h: 50, top: 9, name: "DATE", left: 11, values: ["09/07/020"] },
  { h: 50, top: 3, name: "PROJECT" },
  { h: 50, top: 6, name: "AUTHOR" },
  { h: 50, top: 8, name: "STATION", left: 8, values: ["101.971"] },
  { h: 61, top: 3, name: "ALIGNMENT COORDINATES", left: 25, values: ["675494.096 m", "4656313.086 m"] },
  { h: 49, top: 6, name: "HEIGHT", left: 25, values: ["1060.446 m"] },
  { h: 50, top: 6, name: "OVERBREAK AREA (m2)", left: 11, values: ["2.024 m2"] },
  { h: 50, top: 8, name: "UNDERBREAK AREA (m2)", left: 11, values: ["1.647 m2"] },
  { h: 50, top: 8, name: "THEORETICAL AREA (m2)", left: 11, values: ["127.308 m2"] },
  { h: 49, top: 6, name: "CROSS-SECTION AREA (m2)", left: 11, values: ["127.665 m2"] },
];

export default function App() {
  return (
    <Shell>
      <Global />
      <Header>
        <LogoButton aria-label="Application menu">
          <I s={26} h={30}>
            <path d="M0 28L8 0h9l9 27-7 1-3-8H9l-2 8z" fill="#c6262c" stroke="none" />
            <path d="M11 14l2-7 3 8z" fill={DARK} stroke="none" />
            <path d="M0 28l3-6 5 1-1 5zM18 22l5-2 3 7-6 1z" fill="#e88a86" stroke="none" />
            <path d="M8 0h5L6 20l-4 3z" fill="#e0383c" stroke="none" />
          </I>
        </LogoButton>
        <HeaderRows>
          <TitleRow>
            <Quick>
              {quick.map(([name, icon, w]) => <IconButton key={name} aria-label={name} $w={w}>{icon}</IconButton>)}
              <IconButton aria-label="Undo"><Undo /></IconButton>
              <IconButton aria-label="Undo history"><Caret /></IconButton>
              <IconButton aria-label="Redo"><Undo flip /></IconButton>
              <IconButton aria-label="Redo history"><Caret c="#8b919b" /></IconButton>
              <IconButton aria-label="Customize quick access"><I s={9} h={8}><path d="M0 .500h9" /><path d="M0 3h9L4.500 8z" fill={W} stroke="none" /></I></IconButton>
            </Quick>
            <Title><span>Autodesk AutoCAD 2021</span><span>Tunnel Cross-Sections.dwg</span></Title>
            <IconButton aria-label="Collapse search"><I s={4} h={8}><path d="M0 0l4 4-4 4z" fill={W} stroke="none" /></I></IconButton>
            <SearchBox type="search" aria-label="Search help" placeholder="Type a keyword or phrase" />
            <Account>
              <IconButton aria-label="Search"><I><circle cx="6" cy="6" r="5" fill="#7c828c" /><path d="M10 10l5 5" strokeWidth="2.500" stroke="#c9a88a" /></I></IconButton>
              <AccountButton>
                <I><circle cx="8" cy="4" r="4" fill={B} stroke="none" /><path d="M0 16c0-5 3-7 8-7s8 2 8 7z" fill={B} stroke="none" /></I>
                fnavarrete@a...
                <Caret />
              </AccountButton>
              <IconButton $w={22} aria-label="App store"><I s={15}><path d="M0 1h3l2 9h8" /><path d="M4 3h11l-2 6H5z" fill={W} stroke="none" /><circle cx="6" cy="13" r="1.500" fill={W} /><circle cx="12" cy="13" r="1.500" fill={W} /></I></IconButton>
              <IconButton aria-label="Stay connected"><I><path d="M8 3L3 12h10z" strokeWidth="1.500" /><circle cx="8" cy="3" r="2.200" fill={W} /><circle cx="2.500" cy="12.500" r="2" fill={W} /><circle cx="13.500" cy="12.500" r="2" fill={W} /></I></IconButton>
              <Caret />
              <VRule />
              <IconButton aria-label="Help"><I><circle cx="8" cy="8" r="7.500" fill={W} /><path d="M5.500 6a2.500 2.500 0 1 1 3.500 2.200Q8 8.700 8 10M8 11.500v1.500" stroke="#333b48" strokeWidth="1.500" /></I></IconButton>
              <Caret />
            </Account>
            <WindowButtons $gap={12} $left={72}>
              <IconButton aria-label="Minimize"><Minimize /></IconButton>
              <IconButton aria-label="Restore"><Restore /></IconButton>
              <IconButton aria-label="Close"><Close /></IconButton>
            </WindowButtons>
          </TitleRow>
          <MenuRow>
            {menus.map(([a, u, b, gap]) => <MenuItem key={a + u + b} $gap={gap}>{a}{u && <u>{u}</u>}{b}</MenuItem>)}
            <WindowButtons $gap={5}>
              <IconButton aria-label="Minimize drawing"><Minimize /></IconButton>
              <IconButton aria-label="Restore drawing"><Restore /></IconButton>
              <IconButton aria-label="Close drawing"><Close /></IconButton>
            </WindowButtons>
          </MenuRow>
        </HeaderRows>
      </Header>

      <RibbonTabs>
        <RibbonTab $kind="active">Home</RibbonTab>
        {tabs.map((t) => <RibbonTab key={t}>{t}</RibbonTab>)}
        <RibbonTab $kind="context">Layout</RibbonTab>
        <TabToggle aria-label="Minimize ribbon">
          <I s={15} h={8}><path d="M0 0h15v8H0z" fill="#eceef0" stroke="none" /><path d="M5 5.500h5L7.500 3z" fill="#444" stroke="none" /></I>
          <Caret />
        </TabToggle>
      </RibbonTabs>

      <Ribbon>
        <Panel w={224} title="Draw">
          <BigTool icon={<LineIcon />} label="Line" w={42} />
          <BigTool icon={<PolylineIcon />} label="Polyline" w={46} />
          <BigTool icon={<CircleIcon />} label="Circle" w={52} menu />
          <BigTool icon={<ArcIcon />} label="Arc" w={42} menu />
          <Col $w={3} />
          <Col $w={31}>
            <IconTool icon={<RectIcon />} label="Rectangle" menu />
            <IconTool icon={<EllipseIcon />} label="Ellipse" menu />
            <IconTool icon={<HatchIcon />} label="Hatch" menu />
          </Col>
        </Panel>
        <Panel w={250} title="Modify" left={7}>
          <Col $w={72}><Tool icon={<MoveIcon />} label="Move" /><Tool icon={<CopyIcon />} label="Copy" /><Tool icon={<StretchIcon />} label="Stretch" /></Col>
          <Col $w={69}><Tool icon={<RotateIcon />} label="Rotate" /><Tool icon={<MirrorIcon />} label="Mirror" /><Tool icon={<ScaleIcon />} label="Scale" /></Col>
          <Col $w={65}><Tool icon={<TrimIcon />} label="Trim" menu /><Tool icon={<FilletIcon />} label="Fillet" menu /><Tool icon={<ArrayIcon />} label="Array" menu /></Col>
          <Col $w={10} />
          <Col><IconTool icon={<EraseIcon />} label="Erase" /><IconTool icon={<ExplodeIcon />} label="Explode" /><IconTool icon={<OffsetIcon />} label="Offset" /></Col>
        </Panel>
        <Panel w={189} title="Annotation">
          <BigTool icon={<TextIcon />} label="Text" w={46} menu />
          <BigTool icon={<DimensionIcon />} label="Dimension" w={63} />
          <Col $w={4} />
          <Col $w={72}><Tool icon={<LinearIcon />} label="Linear" menu /><Tool icon={<LeaderIcon />} label="Leader" menu /><Tool icon={<TableIcon />} label="Table" /></Col>
        </Panel>
        <Panel w={273} title="Layers">
          <BigTool icon={<LayerPropsIcon />} label={"Layer\nProperties"} w={62} />
          <Col $w={208}>
            <Row>
              <Combo>
                <Bulb /><Sun /><VpFreeze /><Unlock /><Swatch $c="#fff" />
                <Select aria-label="Layer" defaultValue="TUNNEL_INFO"><option>TUNNEL_INFO</option></Select>
                <Caret s={8} />
              </Combo>
            </Row>
            <LayerRow names={["Off", "Isolate", "Freeze", "Lock"]} badges={["bulbOff", "in", "snow", "lock"]} label="Make Current" last="current" />
            <LayerRow names={["Turn on", "Unisolate", "Thaw", "Unlock"]} badges={["bulb", "out", "sun", "unlock"]} label="Match Layer" last="match" />
          </Col>
        </Panel>
        <Panel w={161} title="Block">
          <BigTool icon={<InsertIcon />} label="Insert" w={42} menu />
          <Col $w={3} />
          <Col $w={112}><Tool icon={<BlockIcon kind="new" />} label="Create" /><Tool icon={<BlockIcon kind="edit" />} label="Edit" /><Tool icon={<BlockIcon kind="attr" />} label="Edit Attributes" menu /></Col>
        </Panel>
        <Panel w={265} title="Properties" launcher>
          <BigTool icon={<MatchIcon />} label={"Match\nProperties"} w={63} />
          <Col $w={20}><IconTool icon={<Wheel />} label="Color" /><IconTool icon={<Weights />} label="Lineweight" /><IconTool icon={<Types />} label="Linetype" /></Col>
          <Col $w={180}>
            <Row><Combo><ComboSpace /><Swatch $c="#000" /><ComboSpace /><Select aria-label="Object color"><option>ByLayer</option></Select><Caret s={8} /></Combo></Row>
            <Row><Combo><Stroke /><Select aria-label="Lineweight"><option>ByLayer</option></Select><Caret s={8} /></Combo></Row>
            <Row><Combo><Stroke /><Select aria-label="Linetype"><option>ByLayer</option></Select><Caret s={8} /></Combo></Row>
          </Col>
        </Panel>
        <Panel w={69} title="Groups">
          <BigTool icon={<GroupIcon />} label="Group" w={44} />
          <Col $w={2} />
          <Col $w={16}>
            <IconTool icon={<GroupSmall kind="un" />} label="Ungroup" />
            <IconTool icon={<GroupSmall kind="edit" />} label="Group edit" />
            <ActiveFrame aria-label="Group selection" aria-pressed="true"><GroupSmall kind="sel" /></ActiveFrame>
          </Col>
        </Panel>
        <Panel w={97} title="Utilities">
          <BigTool icon={<MeasureIcon />} label="Measure" w={72} menu />
          <Col $w={2} />
          <Col><IconTool icon={<QuickSelect />} label="Quick select" /><IconTool icon={<SelectAll />} label="Select all" /><IconTool icon={<Calculator />} label="Calculator" /></Col>
        </Panel>
        <Panel w={80} title="Clipboard" menu={false}>
          <BigTool icon={<PasteIcon />} label="Paste" w={56} menu />
          <Col><IconTool icon={<CutClip />} label="Cut" /><IconTool icon={<CopyClip />} label="Copy clip" /></Col>
        </Panel>
        <Panel w={64} title="View" launcher>
          <BigTool icon={<BaseIcon />} label="Base" w={62} menu />
        </Panel>
      </Ribbon>

      <DocTabs>
        <DocTab $w={124}>Start</DocTab>
        <DocTab $w={166} $on>Tunnel Cross-Sections*<IconButton aria-label="Close tab"><Close s={9} c="#b4b9c1" /></IconButton></DocTab>
        <AddTab aria-label="New tab"><Plus /></AddTab>
      </DocTabs>

      <Canvas>
        <Paper>
          <Margins>
            <Sheet>
              <TitleBlock>
                {fields.map((f) => (
                  <Field key={f.name} $h={f.h} $top={f.top}>
                    <FieldName>{f.name}</FieldName>
                    {f.values?.map((v) => <FieldValue key={v} $left={f.left ?? 0}>{v}</FieldValue>)}
                  </Field>
                ))}
              </TitleBlock>
              <CrossSection />
            </Sheet>
          </Margins>
        </Paper>
        <Ucs width="54" height="88" viewBox="0 0 54 88" fill="none" stroke="#2c4bd0" strokeWidth="1.500" aria-label="UCS icon">
          <path d="M1.500 1V86.500H51.500ZM1.500 78.500h8v8M3 27l6 6 6-6M9 33v8M29 72l12 13M41 72L29 85" />
        </Ucs>
        <NavBar>
          <I s={33} h={132}>
            <g stroke="#888" strokeWidth="1.500">
              <path d="M23 5l4 3M27 5l-4 3" strokeWidth="1" />
              <circle cx="16" cy="31" r="10" /><circle cx="15" cy="31" r="4" /><path d="M20 36h6" />
              <path d="M10 62l4 10h8l4-10M13 63v-6M17 62v-8M21 62v-6" />
              <path d="M6 78l20 20M26 78L6 98M12 88h8" /><circle cx="22" cy="95" r="3" />
              <path d="M14 111h5l-2.500 3zM22 126l4 3" strokeWidth="1" />
            </g>
          </I>
        </NavBar>
        <CommandBar>
          <CommandGrip>
            <I s={6} h={18}><path d="M1 0v18M5 0v18" stroke="#dfe2e7" strokeWidth="1.500" strokeDasharray="1.500 1.500" /></I>
            <IconButton type="button" $w={18} aria-label="Close command line"><Close s={10} /></IconButton>
            <IconButton type="button" $w={26} aria-label="Customize"><I><path d="M2 14l7-7" strokeWidth="2.500" /><path d="M15 4l-3 2-2-2 2-3.500C9 0 7 2 8 5l2 3c3 1 5-1 5-4z" fill={W} stroke="none" /></I></IconButton>
          </CommandGrip>
          <IconButton type="button" $w={32} aria-label="Recent commands">
            <I s={26} h={14}><path d="M1.500 2.500h14v10h-14zM1 3.500h15M3.500 6l2.500 2-2.500 2M7 10.500h4" stroke="#777" /><path d="M19 6h7l-3.500 4z" fill="#777" stroke="none" /></I>
          </IconButton>
          <CommandInput aria-label="Command" placeholder="Type a command" />
          <IconButton type="button" $w={16} aria-label="Command history"><I s={6} h={4}><path d="M0 4h6L3 0z" fill="#777" stroke="none" /></I></IconButton>
        </CommandBar>
      </Canvas>

      <BottomBar>
        <LayoutTabs>
          <LayoutTab $w={60}>Model</LayoutTab>
          <LayoutTab $w={62}>Layout1</LayoutTab>
          <LayoutTab $w={67}>Layout2</LayoutTab>
          <LayoutTab $w={57}>DCS-1</LayoutTab>
          <LayoutTab $w={57} $on>DCS-2</LayoutTab>
          <LayoutTab $w={28} aria-label="New layout"><Plus /></LayoutTab>
        </LayoutTabs>
        <Status>
          <StatusGroup $w={40}><StatusButton $w={40}>PAPER</StatusButton></StatusGroup>
          <StatusGroup $w={170}>
            <StatusButton $w={24} aria-label="Ortho"><I><path d="M.500 0v15.500H16M.500 10.500h5v5" /></I></StatusButton>
            <StatusButton $w={24} aria-label="Polar"><I><circle cx="7" cy="8" r="6" /><path d="M7 8h9M7 8l6-7" /></I></StatusButton>
            <StatusButton $w={18} aria-label="Polar options"><Caret s={7} /></StatusButton>
            <StatusButton $w={20} aria-label="Isodraft"><I s={14} h={18}><path d="M7 0v18" stroke="#4fb07e" /><path d="M0 2l14 14" stroke="#c0574a" /></I></StatusButton>
            <StatusButton $w={18} aria-label="Isodraft options"><Caret s={7} /></StatusButton>
            <StatusButton $w={26} $rule aria-label="Object snap tracking"><I><path d="M13 2L1 14.500h15" /><path d="M6 8l3 3" stroke={B} /></I></StatusButton>
            <StatusButton $w={22} $on aria-label="Object snap"><I s={18}><path d="M4 3.500h12.500v13H3.500V6" stroke="#fff" strokeWidth="1.500" /><path d="M1 1h4.500v4.500H1z" fill="#5b8bbf" stroke="#fff" /></I></StatusButton>
            <StatusButton $w={18} aria-label="Snap options"><Caret s={7} /></StatusButton>
          </StatusGroup>
          <StatusGroup $w={72}>
            <StatusButton $w={24} aria-label="Annotation visibility"><I><path d="M.500 4V.5h15v15h-15V12" strokeDasharray="2 1.500" /><path d="M6.500 6.500h6v6h-6zM1 1l5 5" /></I></StatusButton>
            <StatusButton $w={24} aria-label="Annotation scale"><I><path d="M6 1l5 15-4-4-6 4 4-7z" fill={W} stroke={W} /><circle cx="12.500" cy="3" r="2" /></I></StatusButton>
            <StatusButton $w={24} aria-label="Auto scale"><I><path d="M6 1l5 15-4-4-6 4 4-7z" fill={W} stroke={W} /><path d="M13.500 0l-2.500 4h4l-2 4" /></I></StatusButton>
          </StatusGroup>
          <StatusGroup $w={65}>
            <StatusButton $w={23} aria-label="Workspace"><I><circle cx="8" cy="8" r="4" strokeWidth="3.500" /><circle cx="8" cy="8" r="6.800" strokeWidth="2" strokeDasharray="2.700 2.650" /></I></StatusButton>
            <StatusButton $w={17} aria-label="Workspace options"><Caret s={7} /></StatusButton>
            <StatusButton $w={25} $rule aria-label="Annotation monitor"><I><path d="M8 0v16M0 8h16" strokeWidth="1.800" /></I></StatusButton>
          </StatusGroup>
          <StatusGroup $w={24}><StatusButton $w={24} aria-label="Isolate"><I><path d="M1.500 1.500h5v5h-5zM4.500 14.500l3-5 3 5z" /><circle cx="13" cy="6" r="2.500" /></I></StatusButton></StatusGroup>
          <StatusGroup $w={22}><StatusButton $w={22} aria-label="Performance"><I><circle cx="9" cy="7" r="6.500" fill="#2f80c4" stroke="none" /><path d="M0 9h7v6H0z" fill={Y} stroke="none" /><path d="M1 3.500h8M3.500 1v6" /><path d="M7 11l3 3.500 6-7" stroke="#4fb850" strokeWidth="2.500" /></I></StatusButton></StatusGroup>
          <StatusGroup $w={50}>
            <StatusButton $w={24} aria-label="Clean screen"><I><path d="M.500 2.500h15v12H.5zM9 8l3.500-3.500M9.500 4.500h3v3M7 9.500l-3.500 3M3.500 9.500v3h3" /></I></StatusButton>
            <StatusButton $w={24} aria-label="Customization"><I><path d="M0 2h16M0 8h16M0 14h16" strokeWidth="2" /></I></StatusButton>
          </StatusGroup>
        </Status>
      </BottomBar>
      <Taskbar><TaskSearch /><TaskItem /><Clock>16:57</Clock></Taskbar>
    </Shell>
  );
}
